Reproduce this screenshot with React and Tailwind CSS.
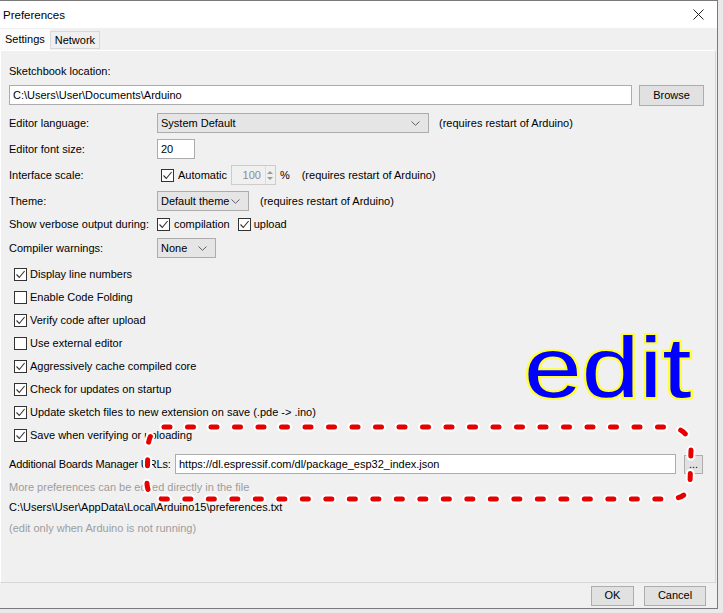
import React from 'react';

const Check = ({ checked }) => (
  <span className="w-[13px] h-[13px] border border-[#333333] bg-white flex items-center justify-center shrink-0">
    {checked && (
      <svg width="11" height="11" viewBox="0 0 11 11">
        <path d="M1.5 5.5 L4.3 8.5 L9.6 2" fill="none" stroke="#333333" strokeWidth="1.1" />
      </svg>
    )}
  </span>
);

const Chevron = () => (
  <svg width="9" height="5" viewBox="0 0 9 5" className="shrink-0">
    <path d="M0.5 0.5 L4.5 4.3 L8.5 0.5" fill="none" stroke="#606060" strokeWidth="1" />
  </svg>
);

const Select = ({ value, width }) => (
  <div
    className="h-[20px] bg-[#e5e5e5] border border-[#acacac] flex items-center justify-between pl-[3px] pr-[8px]"
    style={{ width }}
  >
    <span className="whitespace-nowrap">{value}</span>
    <Chevron />
  </div>
);

const Row = ({ label, children, className = '' }) => (
  <div className={`h-[20px] flex items-center whitespace-nowrap ${className}`}>
    <span className="w-[148px] shrink-0">{label}</span>
    {children}
  </div>
);

const options = [
  ['Display line numbers', true],
  ['Enable Code Folding', false],
  ['Verify code after upload', true],
  ['Use external editor', false],
  ['Aggressively cache compiled core', true],
  ['Check for updates on startup', true],
  ['Update sketch files to new extension on save (.pde -> .ino)', true],
  ['Save when verifying or uploading', true],
];

export default function App() {
  return (
    <div className="relative w-[723px] h-[613px] bg-[#e9e9e9] overflow-hidden font-['Liberation_Sans',Arial,sans-serif] text-[11px] text-black">
      <div className="w-[718px] h-[609px] flex flex-col bg-[#f0f0f0] border-t border-r border-b border-[#7a7a7a]">
        {/* title bar */}
        <div className="h-[27px] bg-white flex items-center justify-between pl-[3px] pr-[13px] shrink-0">
          <span className="text-[11.5px] pt-[2px]">Preferences</span>
          <svg width="11" height="11" viewBox="0 0 11 11">
            <path d="M0.5 0.5 L10.5 10.5 M10.5 0.5 L0.5 10.5" stroke="#222" strokeWidth="1" />
          </svg>
        </div>

        {/* tabs */}
        <div className="h-[22px] flex items-end shrink-0">
          <div className="h-[21px] px-[5px] bg-[#fbfbfb] flex items-center">Settings</div>
          <div className="h-[18px] mb-[1px] px-[4px] bg-[#f0f0f0] border border-[#d9d9d9] flex items-center">Network</div>
        </div>

        {/* panel */}
        <div className="flex-1 flex flex-col border-t border-l border-white border-r border-b border-r-[#d7d7d7] border-b-[#d7d7d7] pl-[8px] pr-[11px] mr-[1px]">
          <div className="h-[16px] leading-[16px] mt-[12px]">Sketchbook location:</div>
          <div className="h-[20px] mt-[6px] flex items-center gap-[7px]">
            <div className="w-[623px] h-[20px] bg-white border border-[#acacac] flex items-center pl-[3px]">
              {'C:\\Users\\User\\Documents\\Arduino'}
            </div>
            <div className="w-[65px] h-[21px] bg-[#e1e1e1] border border-[#adadad] flex items-center justify-center">
              Browse
            </div>
          </div>

          <Row label="Editor language:" className="mt-[8px]">
            <Select value="System Default" width={272} />
            <span className="ml-[10px]">(requires restart of Arduino)</span>
          </Row>

          <Row label="Editor font size:" className="mt-[6px]">
            <div className="w-[38px] h-[20px] bg-white border border-[#acacac] flex items-center pl-[3px]">20</div>
          </Row>

          <Row label="Interface scale:" className="mt-[6px]">
            <span className="ml-[4px]"><Check checked /></span>
            <span className="ml-[4px]">Automatic</span>
            <div className="ml-[4px] w-[45px] h-[20px] bg-[#f0f0f0] border border-[#cccccc] flex items-center justify-end">
              <span className="text-[#8c8c8c] mr-[4px]">100</span>
              <div className="w-[10px] h-[18px] flex flex-col items-center justify-center gap-[3px] border-l border-[#dddddd]">
                <svg width="6" height="3" viewBox="0 0 6 3"><path d="M0 3 L3 0 L6 3 Z" fill="#9a9a9a" /></svg>
                <svg width="6" height="3" viewBox="0 0 6 3"><path d="M0 0 L3 3 L6 0 Z" fill="#9a9a9a" /></svg>
              </div>
            </div>
            <span className="ml-[4px]">%</span>
            <span className="ml-[12px]">(requires restart of Arduino)</span>
          </Row>

          <Row label="Theme:" className="mt-[6px]">
            <Select value="Default theme" width={92} />
            <span className="ml-[11px]">(requires restart of Arduino)</span>
          </Row>

          <Row label="Show verbose output during:" className="mt-[3px]">
            <Check checked />
            <span className="ml-[4px]">compilation</span>
            <span className="ml-[8px]"><Check checked /></span>
            <span className="ml-[3px]">upload</span>
          </Row>

          <Row label="Compiler warnings:" className="mt-[4px]">
            <Select value="None" width={59} />
          </Row>

          <div className="mt-[5px] flex flex-col">
            {options.map(([text, checked]) => (
              <div key={text} className="h-[23px] flex items-center pl-[5px] whitespace-nowrap">
                <Check checked={checked} />
                <span className="ml-[3px]">{text}</span>
              </div>
            ))}
          </div>

          <div className="h-[20px] mt-[7px] flex items-center whitespace-nowrap">
            <span className="w-[166px] shrink-0 tracking-[-0.15px]">Additional Boards Manager URLs:</span>
            <div className="w-[501px] h-[20px] bg-white border border-[#acacac] flex items-center pl-[3px]">
              https://dl.espressif.com/dl/package_esp32_index.json
            </div>
            <div className="ml-[8px] w-[19px] h-[19px] bg-[#e1e1e1] border border-[#adadad] flex items-center justify-center leading-none">
              ...
            </div>
          </div>

          <div className="h-[16px] leading-[16px] mt-[5px] text-[#9d9d9d]">More preferences can be edited directly in the file</div>
          <div className="h-[16px] leading-[16px] mt-[4px]">{'C:\\Users\\User\\AppData\\Local\\Arduino15\\preferences.txt'}</div>
          <div className="h-[16px] leading-[16px] mt-[5px] text-[#9d9d9d]">(edit only when Arduino is not running)</div>
        </div>

        {/* footer buttons */}
        <div className="h-[25px] flex items-center justify-end gap-[10px] pr-[11px] shrink-0">
          <div className="w-[43px] h-[20px] bg-[#e1e1e1] border border-[#adadad] flex items-center justify-center">OK</div>
          <div className="w-[62px] h-[20px] bg-[#e1e1e1] border border-[#adadad] flex items-center justify-center">Cancel</div>
        </div>
      </div>

      {/* annotation: big "edit" */}
      <div className="absolute left-[524px] top-[325px] origin-left scale-x-[1.22] text-[85px] leading-none text-[#0000ff] font-['Liberation_Sans',Arial,sans-serif] [-webkit-text-stroke:4px_#ffff33] [paint-order:stroke_fill]">
        edit
      </div>

      {/* annotation: red dashed loop */}
      <svg className="absolute left-0 top-0 pointer-events-none" width="723" height="613" viewBox="0 0 723 613">
        <path
          d="M164 427 L668 427 Q690 428 691 450 L690 484 Q688 499 668 499 L164 499 Q148 499 147 484 L148 446 Q150 428 164 427 Z"
          fill="none"
          stroke="#ffffff"
          strokeWidth="9"
          strokeLinecap="round"
          strokeDasharray="6 17.5"
        />
        <path
          d="M164 427 L668 427 Q690 428 691 450 L690 484 Q688 499 668 499 L164 499 Q148 499 147 484 L148 446 Q150 428 164 427 Z"
          fill="none"
          stroke="#e60000"
          strokeWidth="5"
          strokeLinecap="round"
          strokeDasharray="6 17.5"
        />
      </svg>
    </div>
  );
}
